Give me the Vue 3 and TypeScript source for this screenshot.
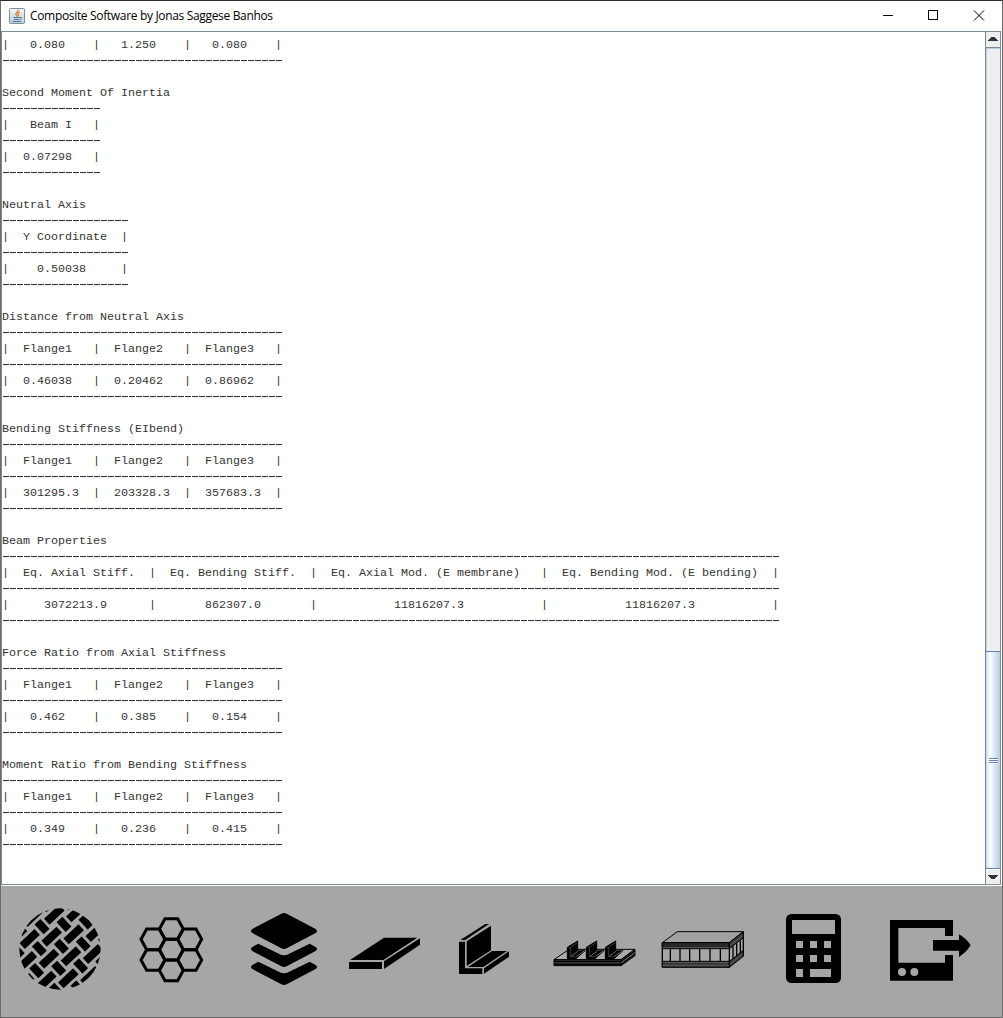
<script setup lang="ts">
interface Line {
  text: string
  rule: boolean
}

const flanges = '|  Flange1   |  Flange2   |  Flange3   |'
const wide = 40

function rule(n: number): string {
  return '-'.repeat(n)
}

const report: string[] = [
  '|   0.080    |   1.250    |   0.080    |',
  rule(wide),
  '',
  'Second Moment Of Inertia',
  rule(14),
  '|   Beam I   |',
  rule(14),
  '|  0.07298   |',
  rule(14),
  '',
  'Neutral Axis',
  rule(18),
  '|  Y Coordinate  |',
  rule(18),
  '|    0.50038     |',
  rule(18),
  '',
  'Distance from Neutral Axis',
  rule(wide),
  flanges,
  rule(wide),
  '|  0.46038   |  0.20462   |  0.86962   |',
  rule(wide),
  '',
  'Bending Stiffness (EIbend)',
  rule(wide),
  flanges,
  rule(wide),
  '|  301295.3  |  203328.3  |  357683.3  |',
  rule(wide),
  '',
  'Beam Properties',
  rule(111),
  '|  Eq. Axial Stiff.  |  Eq. Bending Stiff.  |  Eq. Axial Mod. (E membrane)   |  Eq. Bending Mod. (E bending)  |',
  rule(111),
  '|     3072213.9      |       862307.0       |           11816207.3           |           11816207.3           |',
  rule(111),
  '',
  'Force Ratio from Axial Stiffness',
  rule(wide),
  flanges,
  rule(wide),
  '|   0.462    |   0.385    |   0.154    |',
  rule(wide),
  '',
  'Moment Ratio from Bending Stiffness',
  rule(wide),
  flanges,
  rule(wide),
  '|   0.349    |   0.236    |   0.415    |',
  rule(wide),
]

const lines: Line[] = report.map((text) => ({ text, rule: text.startsWith('--') }))

// Weave pattern: long and short strands repeat on one skewed lattice.
const weave: { x: number; y: number }[] = []
for (let i = -3; i <= 3; i++) {
  for (let j = -3; j <= 3; j++) {
    weave.push({ x: i * 66 - j * 8, y: -i * 7 + j * 66 })
  }
}

const cells: [number, number][] = [
  [139, 149], [139, 87], [139, 211], [84, 118], [84, 180], [194, 118], [194, 180],
]
function hexagon([x, y]: [number, number]): string {
  return `${x - 36},${y} ${x - 19},${y - 31} ${x + 19},${y - 31} ${x + 36},${y} ${x + 19},${y + 31} ${x - 19},${y + 31}`
}

function box(i: number): string {
  return `${111 * i + 1} 886 111 131`
}
</script>

<template>
  <div class="window">
    <header class="titlebar">
      <svg class="java" viewBox="0 0 16 16" width="16" height="16">
        <defs>
          <linearGradient id="jbg" x1="0" y1="0" x2="0" y2="1">
            <stop offset="0" stop-color="#f4f7f9" />
            <stop offset="1" stop-color="#bccbd6" />
          </linearGradient>
        </defs>
        <rect x=".5" y=".5" width="15" height="15" rx="1" fill="url(#jbg)" stroke="#7890a2" />
        <path d="M9 1.500C10 4 6 4.500 7 6.500L8 8.500M11 4C8 5 9 6 9.500 7L9 8.500" fill="none" stroke="#e57b25" stroke-width="1.300" />
        <path d="M4.500 9.500h6.500M5 11.500h5.500M3.500 13.500h8.500M11 9.500c2.500-.5 2 1.500 0 2" fill="none" stroke="#4f7892" />
      </svg>
      <span class="title">Composite Software by Jonas Saggese Banhos</span>
      <svg class="controls" viewBox="0 0 138 30" width="138" height="30" shape-rendering="crispEdges">
        <path d="M19 14.500h10" stroke="#000" />
        <rect x="64.500" y="9.500" width="9" height="9" fill="none" stroke="#000" />
        <path d="M110 9.500l10 10M120 9.500l-10 10" stroke="#000" shape-rendering="auto" />
      </svg>
    </header>

    <main class="pane">
      <div class="report">
        <div v-for="(line, i) in lines" :key="i" class="line"><span :class="line.rule ? 'rule' : 'words'">{{ line.text }}</span></div>
      </div>
      <div class="scrollbar">
        <div class="arrow up">
          <svg width="14" height="15" viewBox="0 0 14 15" shape-rendering="crispEdges"><path d="M2 9h10v-1h-1v-1h-1v-1h-1v-1H5v1H4v1H3v1H2z" fill="#333" /></svg>
        </div>
        <div class="track"></div>
        <div class="thumb">
          <div class="grip"><i></i><i></i><i></i></div>
        </div>
        <div class="arrow down">
          <svg width="14" height="14" viewBox="0 0 14 14" shape-rendering="crispEdges"><path d="M2 5h10v1h-1v1h-1v1H9v1H5V8H4V7H3V6H2z" fill="#333" /></svg>
        </div>
      </div>
    </main>

    <nav class="toolbar">
      <svg :viewBox="box(0)">
        <g transform="translate(0 880) scale(.33333)">
          <clipPath id="disc"><circle cx="180" cy="207" r="122" /></clipPath>
          <g clip-path="url(#disc)">
            <g v-for="(p, i) in weave" :key="i" :transform="`translate(${p.x} ${p.y})`">
              <rect x="124" y="158" width="62" height="24" rx="1" transform="rotate(-43 155 170)" />
              <rect x="164" y="187" width="40" height="24" rx="1" transform="rotate(47 184 199)" />
            </g>
          </g>
        </g>
      </svg>

      <svg :viewBox="box(1)">
        <g transform="translate(125 900) scale(.33333)" fill="none" stroke="#000" stroke-width="9">
          <polygon v-for="(c, i) in cells" :key="i" :points="hexagon(c)" />
        </g>
      </svg>

      <svg :viewBox="box(2)">
        <g transform="translate(235 900) scale(.33333)">
          <path d="M139 41Q147 37 155 41L242 87Q250 93 242 99L155 145Q147 149 139 145L52 99Q44 93 52 87Z" />
          <path d="M70 131L133 162Q147 169 161 162L224 131L242 141Q250 147 242 153L155 199Q147 203 139 199L52 153Q44 147 52 141Z" />
          <path d="M70 185L133 216Q147 223 161 216L224 185L242 195Q250 201 242 207L155 253Q147 257 139 253L52 207Q44 201 52 195Z" />
        </g>
      </svg>

      <svg :viewBox="box(3)">
        <g transform="translate(340 900) scale(.33333)">
          <path d="M132 113H232L130 180H30Z" />
          <path d="M27 186H126V207H27Z" />
          <path d="M132 184L240 115V134L132 207Z" />
        </g>
      </svg>

      <svg :viewBox="box(4)">
        <g transform="translate(440 900) scale(.33333)">
          <path d="M61 120L136 72H147L76 120Z" />
          <path d="M57 125H75V205H127V222H57Z" />
          <path d="M80 124L153 77V151L80 198Z" />
          <path d="M84 201L156 153H201L130 201Z" />
          <path d="M132 205L207 154V170L132 221Z" />
        </g>
      </svg>

      <svg :viewBox="box(5)">
        <g transform="translate(545 900) scale(.33333)" stroke="#000" stroke-width="3">
          <path d="M27 179L72 148H270L228 179Z" fill="#aaa" />
          <path d="M27 179H228V197H27Z" fill="#333" />
          <path d="M228 179L270 148V167L228 197Z" fill="#555" />
          <path d="M27 184H228L270 153M27 193H228L270 162" fill="none" stroke-width="4" />
          <path d="M228 189L270 158" stroke="#999" stroke-dasharray="4 3" stroke-width="2" />
          <g v-for="x in [0, 57, 114]" :key="x" :transform="`translate(${x} 0)`">
            <path d="M67 142L98 123V153L120 152L93 176H67Z" />
            <path d="M69 142H76V170H92M76 142L98 127" fill="none" stroke="#555" stroke-width="2" />
            <path d="M78 169L99 154M94 169L118 153" fill="none" stroke="#999" stroke-width="2" />
          </g>
        </g>
      </svg>

      <svg :viewBox="box(6)">
        <g transform="translate(652 900) scale(.33333)" stroke="#000" stroke-width="3" fill="none">
          <path d="M31 128L76 95H274L232 128Z" fill="#a0a0a0" />
          <path d="M31 128H232V146H31Z" fill="#292929" />
          <path d="M31 184H232V202H31Z" fill="#333" />
          <path d="M232 128L274 95V113L232 146Z" fill="#3a3a3a" />
          <path d="M232 184L274 151V169L232 202Z" fill="#3a3a3a" />
          <path d="M31 128V202M232 128V202M274 95V169" stroke-width="4" />
          <path d="M55 146V184M84 146V184M113 146V184M143 146V184M174 146V184M205 146V184M243 138V176M254 130V168M265 122V160" stroke-width="4" />
          <path d="M31 143H232M31 188H232" stroke="#777" stroke-width="2" />
          <path d="M31 196H232M234 137L274 105M234 193L274 161" stroke="#777" stroke-width="2" />
        </g>
      </svg>

      <svg :viewBox="box(7)">
        <g transform="translate(770 900) scale(.33333)">
          <rect x="48" y="42" width="165" height="207" rx="16" />
          <path d="M66 60H195V102H66ZM78 123H99V144H78ZM120 123H141V144H120ZM162 123H183V144H162ZM78 165H99V186H78ZM120 165H141V186H120ZM162 165H183V186H162ZM78 207H99V231H78ZM120 207H183V231H120Z" fill="#a6a6a6" />
        </g>
      </svg>

      <svg :viewBox="box(8)">
        <g transform="translate(880 900) scale(.33333)">
          <path d="M30 60H219V108H195V84H55V188H195V165H219V242H30Z" />
          <path d="M159 120H237V103Q259 115 272 136Q259 157 237 171V152H159Z" />
          <circle cx="66" cy="216" r="12" fill="#a6a6a6" />
          <circle cx="103" cy="216" r="12" fill="#a6a6a6" />
        </g>
      </svg>
    </nav>
  </div>
</template>

<style>
body {
  margin: 0;
}
</style>

<style scoped>
.window {
  box-sizing: border-box;
  width: 1003px;
  height: 1018px;
  display: flex;
  flex-direction: column;
  overflow: hidden;
  background: #fff;
  border: 1px solid #6b6b6b;
  border-top-color: #2b292d;
}
.titlebar {
  height: 30px;
  flex: none;
  display: flex;
  align-items: center;
}
.java {
  margin-left: 8px;
}
.title {
  margin-left: 5px;
  font: 12px/16px "Open Sans", "Noto Sans", sans-serif;
  letter-spacing: -0.33px;
  color: #000;
  white-space: nowrap;
}
.controls {
  margin-left: auto;
}
.pane {
  box-sizing: border-box;
  height: 854px;
  flex: none;
  display: flex;
  margin-right: 1px;
  border: 1px solid #7a8a99;
}
.report {
  flex: 1;
  padding-top: 5px;
  font-family: "Liberation Mono", "Courier New", monospace;
  font-size: 12px;
  letter-spacing: -0.2px;
  color: #333;
}
.line {
  height: 16px;
  line-height: 16px;
  white-space: pre;
}
/* Low, wide letters on a 7px column grid. */
.words {
  display: block;
  width: max-content;
  font-size: 10.5px;
  letter-spacing: 0;
  transform: scaleX(1.111);
  transform-origin: 0 0;
}
.rule {
  display: block;
  width: max-content;
  height: 16px;
  background: repeating-linear-gradient(90deg, transparent 0 1px, #333 1px 7px) 0 7px / 100% 1px no-repeat;
}
.scrollbar {
  box-sizing: border-box;
  width: 15px;
  display: flex;
  flex-direction: column;
  border-left: 1px solid #7a8a99;
  background: #eee;
}
.arrow {
  flex: none;
}
.arrow svg {
  display: block;
}
.up {
  height: 15px;
  border-bottom: 1px solid #7a8a99;
}
.down {
  height: 14px;
  border-top: 1px solid #fff;
}
.track {
  flex: 1;
  border-left: 1px solid #b8cfe5;
  border-top: 1px solid #b8cfe5;
}
.thumb {
  box-sizing: border-box;
  height: 218px;
  flex: none;
  display: flex;
  align-items: center;
  justify-content: center;
  margin-left: -1px;
  border: 1px solid #6382bf;
  border-right: 0;
  background: linear-gradient(90deg, #c8dcef, #fff 30%, #dce8f3 60%, #b8cfe5);
}
.grip {
  display: flex;
  flex-direction: column;
  padding-top: 2px;
}
.grip i {
  width: 9px;
  height: 1px;
  background: #6382bf;
  border-bottom: 1px solid #fff;
}
.toolbar {
  flex: 1;
  display: flex;
  margin-top: 1px;
  background: #a6a6a6;
}
.toolbar svg {
  flex: none;
  width: 111px;
  height: 131px;
  overflow: visible;
}
</style>
